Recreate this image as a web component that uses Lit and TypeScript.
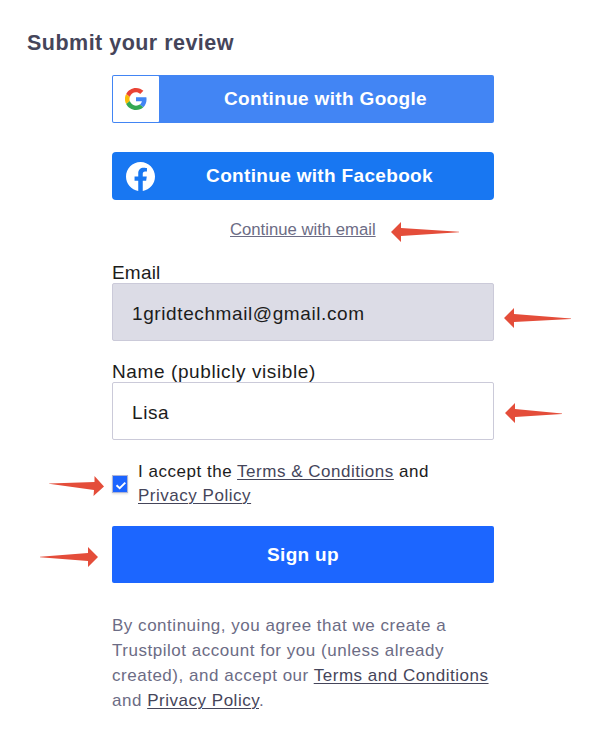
import { LitElement, html, css } from "lit";
import { customElement, property } from "lit/decorators.js";

@customElement("pointer-arrow")
class PointerArrow extends LitElement {
  @property() shape = "left";
  static styles = css`
    :host { display: block; pointer-events: none; }
    svg { display: block; overflow: visible; }
    path { fill: #e44d3a; }
  `;
  render() {
    const shapes: Record<string, string> = {
      left: "M0 10 10 0V6L68 9.8V10.2L10 14V20Z",
      leftLow: "M0 10 10 0V6L67 10.5V10.9L10 14V20Z",
      leftShort: "M0 10 10 0V6L57 10.5V10.9L10 14V20Z",
      right: "M58 10 48 0V6L0 9.8V10.2L48 14V20Z",
      rightLow: "M55 10.5 45.5 0V6L0 7.4V7.8L45 14L44.5 20Z",
    };
    return html`<svg width="70" height="20"><path d=${shapes[this.shape]} /></svg>`;
  }
}

@customElement("app-root")
class AppRoot extends LitElement {
  static styles = css`
    :host {
      display: block;
      position: relative;
      box-sizing: border-box;
      width: 605px;
      height: 741px;
      padding: 31px 0 0 27px;
      overflow: hidden;
      background: #fff;
      color: #1c1c1c;
      font-family: "Liberation Sans", Arial, sans-serif;
      font-size: 19px;
      letter-spacing: 0.6px;
    }
    * { box-sizing: border-box; }
    h1 { margin: 0; font-size: 21.5px; line-height: 24px; letter-spacing: 0.48px; color: #45455a; }
    .form { display: flex; flex-direction: column; width: 382px; margin: 20px 0 0 85px; }
    button {
      display: flex;
      align-items: center;
      width: 100%;
      padding: 0;
      border: 0;
      color: #fff;
      font: bold 19px "Liberation Sans", Arial, sans-serif;
      letter-spacing: 0.33px;
    }
    button span { flex: 1; text-align: center; }
    .google { height: 48px; padding: 1px; border-radius: 2px; background: #4285f4; }
    .google span { padding-right: 1px; }
    .logo { display: flex; align-items: center; justify-content: center; width: 46px; height: 46px; background: #fff; border-radius: 1px; }
    .facebook { height: 48px; margin-top: 29px; padding-left: 14px; border-radius: 4px; background: #1877f2; }
    .facebook span { padding-right: 10px; }
    .email-link { margin: 20px 0 0 118px; font-size: 16.7px; line-height: 19px; letter-spacing: 0; color: #6c6c85; text-decoration: underline; }
    a { color: #45455a; text-decoration: underline; text-decoration-thickness: 1px; text-underline-offset: 2px; }
    label { line-height: 21px; margin-top: 23px; }
    .email-label { letter-spacing: 0.2px; }
    .field { display: flex; align-items: center; height: 58px; padding: 3px 19px 0; border: 1px solid #cbcad9; border-radius: 2px; background: #fff; }
    .filled { background: #dcdce6; }
    .name-label { margin-top: 20px; }
    .accept { display: flex; align-items: center; gap: 10px; margin-top: 20px; font-size: 17px; line-height: 24px; letter-spacing: 0.52px; }
    .check { display: block; width: 16px; height: 18px; border: 1px solid #aeb5d6; background: #1c64ff; box-shadow: 0 1px 2px #0002; }
    .signup { height: 57px; margin-top: 18px; border-radius: 2px; background: #1c66ff; }
    .legal { margin: 30px 0 0; font-size: 17px; line-height: 25px; letter-spacing: 0.52px; color: #6c6c85; white-space: nowrap; }
    pointer-arrow { position: absolute; }
    .at-link { left: 391px; top: 222px; }
    .at-email { left: 504px; top: 308px; }
    .at-name { left: 505px; top: 403px; }
    .at-check { left: 49px; top: 476px; }
    .at-signup { left: 40px; top: 547px; }
  `;
  render() {
    return html`
      <h1>Submit your review</h1>
      <div class="form">
        <button class="google">
          <div class="logo">
            <svg width="22" height="22" viewBox="0 0 48 48">
              <path fill="#EA4335" d="M24 9.5c3.5 0 6.7 1.2 9.2 3.6l6.9-6.9C35.9 2.4 30.5 0 24 0 14.6 0 6.5 5.4 2.6 13.2l8 6.2C12.4 13.7 17.7 9.5 24 9.5z" />
              <path fill="#4285F4" d="M47 24.6c0-1.6-.2-3.1-.4-4.6H24v9h12.9c-.6 3-2.2 5.5-4.7 7.2l7.7 6C44.4 38 47 32 47 24.6z" />
              <path fill="#FBBC05" d="M10.5 28.6A14.5 14.5 0 0 1 10.5 19.4l-8-6.2A24 24 0 0 0 2.6 34.8z" />
              <path fill="#34A853" d="M24 48c6.5 0 11.9-2.1 15.9-5.8l-7.7-6c-2.2 1.5-4.9 2.3-8.2 2.3-6.3 0-11.6-4.2-13.5-9.9l-8 6.2C6.5 42.6 14.6 48 24 48z" />
            </svg>
          </div>
          <span>Continue with Google</span>
        </button>
        <button class="facebook">
          <svg width="29" height="29" viewBox="0 0 24 24">
            <path fill="#fff" d="M24 12.07C24 5.4 18.63 0 12 0S0 5.4 0 12.07C0 18.1 4.39 23.1 10.13 24v-8.44H7.08v-3.49h3.05V9.41c0-3.02 1.79-4.69 4.53-4.69 1.31 0 2.68.24 2.68.24v2.97h-1.51c-1.49 0-1.96.93-1.96 1.89v2.25h3.33l-.53 3.49h-2.8V24C19.61 23.1 24 18.1 24 12.07z" />
          </svg>
          <span>Continue with Facebook</span>
        </button>
        <div class="email-link">Continue with email</div>
        <label class="email-label">Email</label>
        <div class="field filled">1gridtechmail@gmail.com</div>
        <label class="name-label">Name (publicly visible)</label>
        <div class="field">Lisa</div>
        <div class="accept">
          <div class="check">
            <svg width="14" height="16" viewBox="0 0 14 16">
              <path d="M3.5 8.2 6.7 11.2 12.3 5.6" fill="none" stroke="#fff" stroke-width="1.9" />
            </svg>
          </div>
          <div>I accept the <a>Terms &amp; Conditions</a> and<br /><a>Privacy Policy</a></div>
        </div>
        <button class="signup"><span>Sign up</span></button>
        <p class="legal">
          By continuing, you agree that we create a<br />Trustpilot account for you (unless already<br />created), and accept our
          <a>Terms and Conditions</a><br />and <a>Privacy Policy</a>.
        </p>
      </div>
      <pointer-arrow class="at-link" shape="left"></pointer-arrow>
      <pointer-arrow class="at-email" shape="leftLow"></pointer-arrow>
      <pointer-arrow class="at-name" shape="leftShort"></pointer-arrow>
      <pointer-arrow class="at-check" shape="rightLow"></pointer-arrow>
      <pointer-arrow class="at-signup" shape="right"></pointer-arrow>
    `;
  }
}
